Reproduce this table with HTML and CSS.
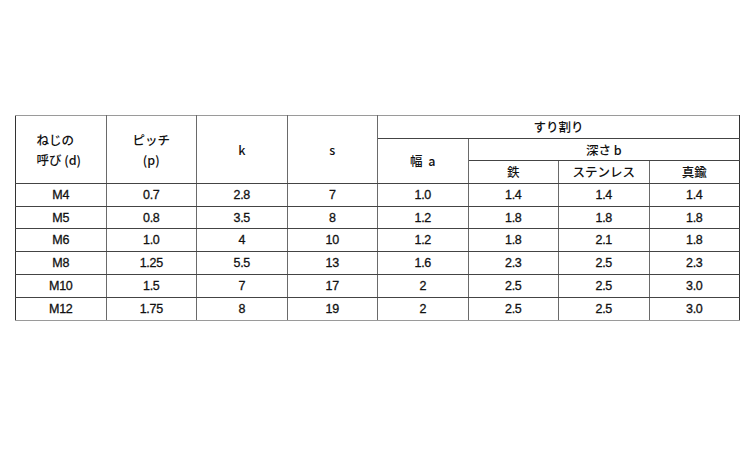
FILE: index.html
```html
<!DOCTYPE html>
<html lang="ja">
<head>
<meta charset="utf-8">
<link rel="stylesheet" href="styles.css">
</head>
<body>
<table class="spec">
  <colgroup>
    <col class="c1"><col class="c2"><col class="c3"><col class="c4">
    <col class="c5"><col class="c6"><col class="c7"><col class="c8">
  </colgroup>
  <thead>
    <tr class="h1">
      <th rowspan="3"><span class="stack">ねじの<br>呼び (d)</span></th>
      <th rowspan="3">ピッチ<br>(p)</th>
      <th rowspan="3">k</th>
      <th rowspan="3">s</th>
      <th colspan="4">すり割り</th>
    </tr>
    <tr class="h2">
      <th rowspan="2">幅&nbsp; a</th>
      <th colspan="3">深さ b</th>
    </tr>
    <tr class="h3">
      <th>鉄</th>
      <th>ステンレス</th>
      <th>真鍮</th>
    </tr>
  </thead>
  <tbody>
    <tr class="r23"><td>M4</td><td>0.7</td><td>2.8</td><td>7</td><td>1.0</td><td>1.4</td><td>1.4</td><td>1.4</td></tr>
    <tr class="r22"><td>M5</td><td>0.8</td><td>3.5</td><td>8</td><td>1.2</td><td>1.8</td><td>1.8</td><td>1.8</td></tr>
    <tr class="r23"><td>M6</td><td>1.0</td><td>4</td><td>10</td><td>1.2</td><td>1.8</td><td>2.1</td><td>1.8</td></tr>
    <tr class="r23"><td>M8</td><td>1.25</td><td>5.5</td><td>13</td><td>1.6</td><td>2.3</td><td>2.5</td><td>2.3</td></tr>
    <tr class="r23"><td>M10</td><td>1.5</td><td>7</td><td>17</td><td>2</td><td>2.5</td><td>2.5</td><td>3.0</td></tr>
    <tr class="r23 last"><td>M12</td><td>1.75</td><td>8</td><td>19</td><td>2</td><td>2.5</td><td>2.5</td><td>3.0</td></tr>
  </tbody>
</table>
</body>
</html>
```
FILE: styles.css
```css
html, body {
  margin: 0;
  padding: 0;
  background: #ffffff;
}
body {
  font-family: "Liberation Sans", "Noto Sans CJK JP", sans-serif;
  color: #111111;
  font-size: 12.5px;
}
.spec {
  margin: 115px 0 0 15px;
  width: 724px;
  border-collapse: collapse;
  table-layout: fixed;
}
.spec col { width: 90.5px; }
.spec th, .spec td {
  border: 1px solid #444444;
  padding: 0;
  text-align: center;
  vertical-align: middle;
  font-weight: normal;
  line-height: 16px;
}
.spec th {
  font-family: "Noto Sans CJK JP", "Liberation Sans", sans-serif;
  font-size: 12.5px;
  font-weight: 500;
}
.spec td {
  letter-spacing: -0.3px;
  -webkit-text-stroke: 0.3px #111111;
}
.spec thead tr.h1 th { border-top-color: #9a9a9a; }
.spec tbody tr.last td { border-bottom-color: #9a9a9a; }
.spec th, .spec td { border-left-color: #6a6a6a; border-right-color: #6a6a6a; }
.spec tr th:first-child, .spec tr td:first-child { border-left-color: #333; }
.spec tr td:last-child, .spec tr.h1 th:last-child, .spec tr.h2 th:last-child, .spec tr.h3 th:last-child { border-right-color: #333; }
.h1 { height: 23px; }
.h2 { height: 22px; }
.h3 { height: 23px; }
.r23 { height: 23px; }
.r22 { height: 22px; }
.stack {
  display: inline-block;
  text-align: left;
  line-height: 20px;
  margin-right: 4px;
}
.h1 th[rowspan] { line-height: 20px; }
```
